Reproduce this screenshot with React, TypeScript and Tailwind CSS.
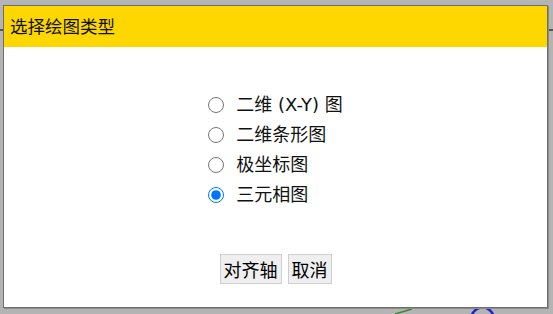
import React, { useState } from "react";

const options = ["二维 (X-Y) 图", "二维条形图", "极坐标图", "三元相图"];

const font = { fontFamily: '"Noto Sans CJK SC", "Noto Sans", sans-serif' };
const labelFont = { fontFamily: '"DejaVu Sans", "Noto Sans CJK SC", sans-serif' };

export default function App() {
  const [selected, setSelected] = useState(3);

  return (
    <div className="relative w-[553px] h-[314px] overflow-hidden bg-[#b4b4b4] pt-[5px] pl-[3px]" style={font}>
      {/* chart behind the dialog */}
      <svg className="absolute left-0 top-0" width="553" height="314">
        <line x1="0" y1="30" x2="553" y2="30" stroke="#555" strokeWidth="2" />
        <line x1="395" y1="314" x2="412" y2="309" stroke="#3a8a3a" strokeWidth="1.5" />
        <path d="M470 320 C474 303 491 303 495 320" fill="none" stroke="#2222cc" strokeWidth="2.5" />
      </svg>

      <div className="relative w-[545px] h-[303px] border border-[#6e6e6e] shadow-[1px_1px_0_#8c8c8c] bg-white flex flex-col">
        <div className="h-[41px] bg-[#ffd700] flex items-center pl-[6px] text-[17.5px] text-[#111]">
          选择绘图类型
        </div>

        <div className="flex flex-col items-center pt-[43px]">
          <div className="flex flex-col items-start">
            {options.map((label, i) => (
              <label
                key={label}
                className="h-[30px] flex items-center text-[18px] text-[#111] leading-none"
                style={labelFont}
              >
                <input
                  type="radio"
                  name="plotType"
                  checked={selected === i}
                  onChange={() => setSelected(i)}
                  className="w-4 h-4 m-0 mr-[12px] accent-[#0075ff]"
                />
                {label}
              </label>
            ))}
          </div>

          <div className="flex gap-[6px] mt-[44px]">
            <button className="h-[30px] px-[3px] bg-[#efefef] border border-[#cfcfcf] text-[18px] text-black leading-none">
              对齐轴
            </button>
            <button className="h-[30px] px-[3px] bg-[#efefef] border border-[#cfcfcf] text-[18px] text-black leading-none">
              取消
            </button>
          </div>
        </div>
      </div>
    </div>
  );
}
